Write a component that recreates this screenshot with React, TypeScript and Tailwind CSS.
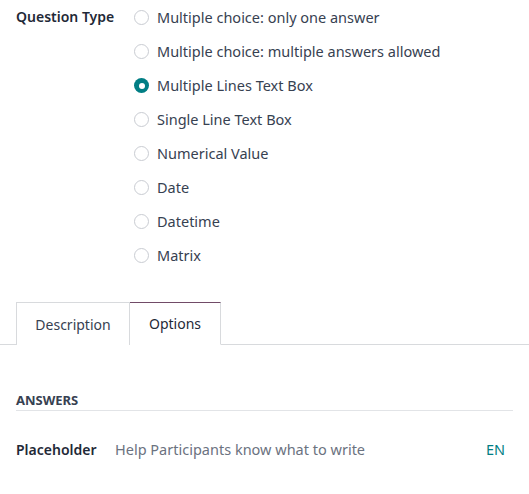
import React from "react";

const options = [
  "Multiple choice: only one answer",
  "Multiple choice: multiple answers allowed",
  "Multiple Lines Text Box",
  "Single Line Text Box",
  "Numerical Value",
  "Date",
  "Datetime",
  "Matrix",
];

const Radio = ({ checked }: { checked: boolean }) =>
  checked ? (
    <span className="flex h-[15px] w-[15px] shrink-0 items-center justify-center rounded-full bg-[#017e84]">
      <span className="block h-[6px] w-[6px] rounded-full bg-white" />
    </span>
  ) : (
    <span className="block h-[15px] w-[15px] shrink-0 rounded-full border border-[#c9ccd2] bg-white" />
  );

export default function App() {
  return (
    <div className="h-[494px] w-[529px] bg-white font-['Noto_Sans',sans-serif] text-[14.5px] text-[#374151]">
      <div className="flex pl-4 pt-[5px]">
        <div className="w-[118px] pt-[1px] text-[14px] font-semibold text-[#1f2937]">Question Type</div>
        <div className="flex flex-col">
          {options.map((o, i) => (
            <label key={o} className="flex h-[34px] items-start gap-2 pt-[2px]">
              <span className="pt-[3px]">
                <Radio checked={i === 2} />
              </span>
              <span>{o}</span>
            </label>
          ))}
        </div>
      </div>

      <div className="mt-[25px] flex border-b border-[#d8dadd] text-[14px]">
        <div className="w-4" />
        <div className="-mb-px flex h-[43px] w-[114px] items-center justify-center border-x border-t border-[#d8dadd] bg-white">
          Description
        </div>
        <div className="-mb-px flex h-[43px] w-[91px] items-center justify-center border-t border-r border-t-[#714b67] border-r-[#d8dadd] border-b border-b-white bg-white text-[#1f2937]">
          Options
        </div>
      </div>

      <div className="px-4 pt-[46px]">
        <div className="border-b border-[#e2e4e7] pb-[1px] text-[13px] font-bold leading-[18px] text-[#374151]">ANSWERS</div>
        <div className="mt-[28px] flex items-center pr-[8px]">
          <div className="w-[99px] text-[14px] font-semibold text-[#1f2937]">Placeholder</div>
          <div className="flex-1 text-[#6b7280]">Help Participants know what to write</div>
          <div className="text-[#017e84]">EN</div>
        </div>
      </div>
    </div>
  );
}
